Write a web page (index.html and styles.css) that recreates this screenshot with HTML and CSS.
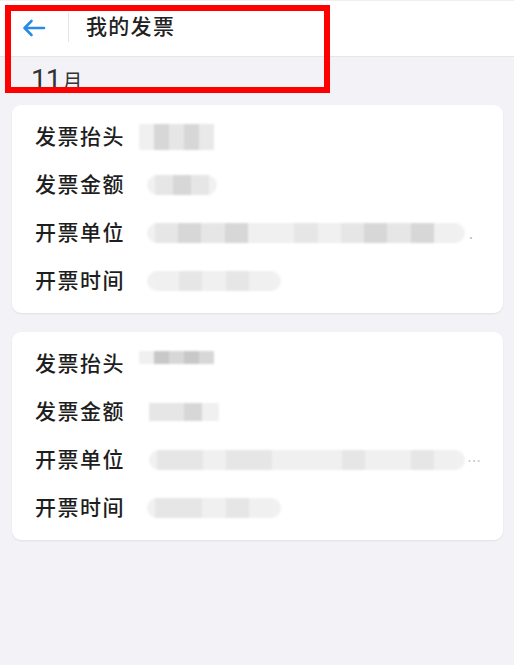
FILE: index.html
```html
<!DOCTYPE html>
<html lang="zh-CN">
<head>
<meta charset="utf-8">
<title>我的发票</title>
<link rel="stylesheet" href="styles.css">
</head>
<body>
<div class="page">
  <header class="header">
    <div class="back">
      <svg width="24" height="18" viewBox="0 0 24 18"><path d="M22 9H2.5M9.5 2L2.5 9l7 7" fill="none" stroke="#2a8be6" stroke-width="2.6" stroke-linecap="round" stroke-linejoin="round"/></svg>
    </div>
    <div class="divider"></div>
    <h1 class="title">我的发票</h1>
  </header>

  <div class="month"><span class="num">11</span><span class="unit">月</span></div>

  <section class="card">
    <div class="row"><span class="label">发票抬头</span>
      <div class="val v-title"><i class="c a"></i><i class="c d"></i><i class="c b"></i><i class="c d"></i><i class="c c2"></i></div></div>
    <div class="row"><span class="label">发票金额</span>
      <div class="val pill v-amt"><i class="c b"></i><i class="c d"></i><i class="c b"></i></div></div>
    <div class="row"><span class="label">开票单位</span>
      <div class="val pill v-unit"><i class="c b"></i><i class="c d"></i><i class="c b"></i><i class="c d"></i><i class="c a"></i><i class="c a"></i><i class="c b"></i><i class="c a"></i><i class="c b"></i><i class="c d"></i><i class="c b"></i><i class="c d"></i><i class="c a"></i></div><span class="dot">.</span></div>
    <div class="row"><span class="label">开票时间</span>
      <div class="val pill v-time"><i class="c a"></i><i class="c b"></i><i class="c a"></i><i class="c b"></i><i class="c a"></i></div></div>
  </section>

  <section class="card">
    <div class="row"><span class="label">发票抬头</span>
      <div class="val v-title v-dark"><i class="c a"></i><i class="c e"></i><i class="c d"></i><i class="c e"></i><i class="c d"></i></div></div>
    <div class="row"><span class="label">发票金额</span>
      <div class="val v-amt2"><i class="c b"></i><i class="c b"></i><i class="c d"></i><i class="c a"></i></div></div>
    <div class="row"><span class="label">开票单位</span>
      <div class="val pill v-unit2"><i class="c b"></i><i class="c b"></i><i class="c a"></i><i class="c b"></i><i class="c b"></i><i class="c a"></i><i class="c a"></i><i class="c a"></i><i class="c b"></i><i class="c a"></i><i class="c a"></i><i class="c b"></i><i class="c a"></i></div><span class="dot">…</span></div>
    <div class="row"><span class="label">开票时间</span>
      <div class="val pill v-time"><i class="c b"></i><i class="c b"></i><i class="c a"></i><i class="c b"></i><i class="c a"></i></div></div>
  </section>

  <div class="annotation"></div>
</div>
</body>
</html>
```

FILE: styles.css
```css
html, body {
  margin: 0;
  padding: 0;
}
body {
  background: #f3f3f7;
  font-family: "Noto Sans CJK SC", "Noto Sans", sans-serif;
  color: #1e1e1e;
  width: 514px;
  height: 665px;
  overflow: hidden;
}
.page {
  position: relative;
  display: flex;
  flex-direction: column;
}
.header {
  background: #fff;
  border-bottom: 1px solid #e5e5ea;
  border-top: 1px solid #f0f0f2;
  box-sizing: border-box;
  height: 57px;
  padding-bottom: 2px;
  display: flex;
  align-items: center;
}
.back {
  width: 46px;
  padding-left: 22px;
  box-sizing: content-box;
  display: flex;
  align-items: center;
  height: 20px;
}
.divider {
  width: 1px;
  height: 29px;
  background: #e4e4e4;
}
.title {
  margin: 0 0 5px 17px;
  font-size: 21px;
  line-height: 28px;
  font-weight: 500;
  letter-spacing: 1.3px;
  color: #222;
}
.month {
  height: 48px;
  padding-left: 31px;
  display: flex;
  align-items: baseline;
  box-sizing: border-box;
  padding-top: 6px;
}
.month .num {
  font-family: Roboto, "Noto Sans", sans-serif;
  font-size: 28px;
  line-height: 34px;
  color: #333;
  letter-spacing: -1px;
}
.month .unit {
  font-size: 20px;
  margin-left: 2px;
  color: #333;
}
.card {
  margin: 0 11px 19px 12px;
  background: #fff;
  border-radius: 9px;
  padding: 8px 0;
  box-shadow: 0 1px 2px rgba(0, 0, 0, 0.08);
}
.row {
  height: 48px;
  display: flex;
  align-items: center;
  padding-left: 23px;
}
.label {
  width: 112px;
  font-size: 21px;
  line-height: 28px;
  margin-bottom: 5px;
  font-weight: 500;
  letter-spacing: 1.5px;
  color: #1e1e1e;
  flex: none;
}
.val {
  display: flex;
  height: 24px;
  filter: blur(1px);
  overflow: hidden;
}
.pill {
  background: #f1f1f1;
  border-radius: 12px;
  padding: 0 8px;
  height: 20px;
}
.c {
  display: block;
  width: 20px;
  height: 100%;
}
.c.a { background: #f0f0f0; }
.c.b { background: #e6e6e6; }
.c.c2 { background: #e9e9e9; }
.c.d { background: #d7d7d7; }
.c.e { background: #c8c8c8; }
.v-title {
  margin-left: -8px;
  height: 26px;
}
.v-title .c { width: 15px; }
.v-amt { width: 54px; }
.v-amt .c { width: 18px; }
.v-unit { width: 302px; margin-right: 2px; }
.v-unit .c { width: 24px; }
.v-time { width: 118px; }
.v-time .c { width: 24px; }
.v-amt2 { width: 70px; height: 18px; margin-left: 2px; }
.v-amt2 .c { width: 18px; }
.v-unit2 { width: 300px; margin-left: 2px; }
.v-unit2 .c { width: 24px; }
.v-dark .c { height: 13px; }
.dot {
  color: #bbb;
  font-size: 14px;
  margin-left: 2px;
}
.annotation {
  position: absolute;
  left: 5px;
  top: 5px;
  width: 325px;
  height: 88px;
  box-sizing: border-box;
  border: 6px solid #ff0000;
}
```
